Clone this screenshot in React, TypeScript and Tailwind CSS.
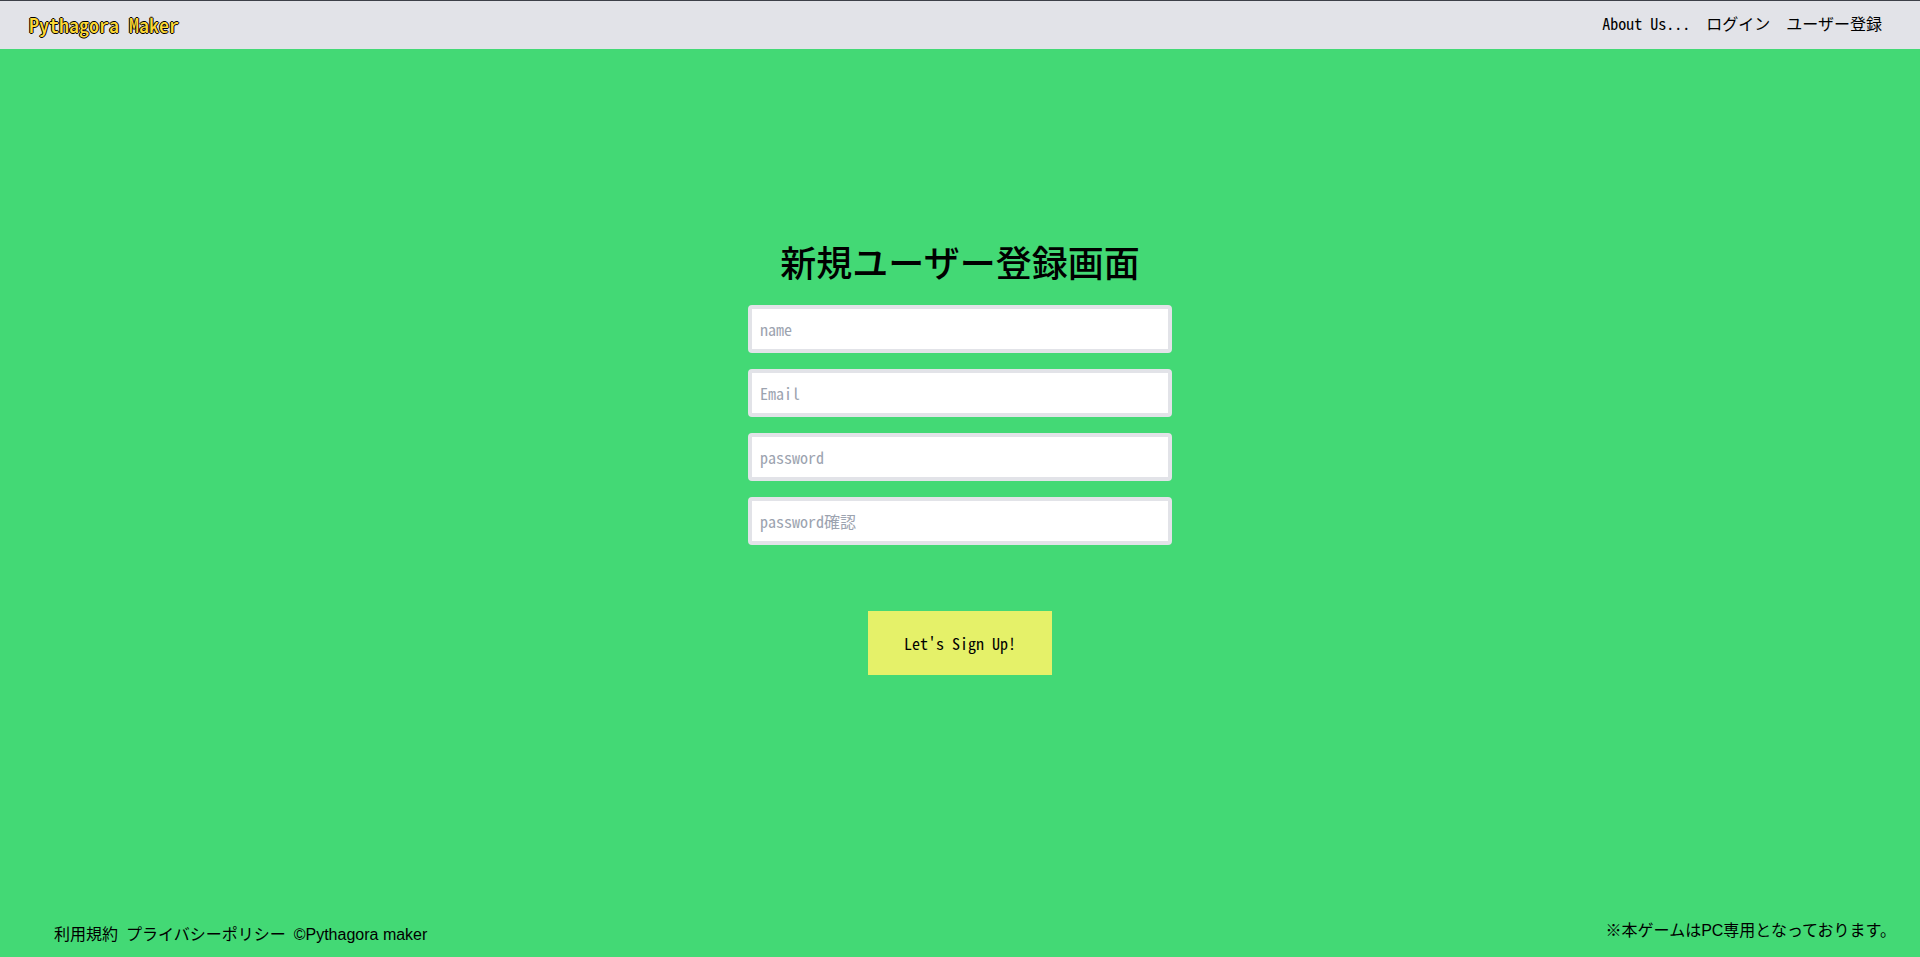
const dotFont =
  "font-['Noto_Sans_CJK_JP',sans-serif] [font-feature-settings:'hwid']";

const fields = [
  { id: 'name', type: 'text', placeholder: 'name' },
  { id: 'email', type: 'email', placeholder: 'Email' },
  { id: 'password', type: 'password', placeholder: 'password' },
  { id: 'password-confirmation', type: 'password', placeholder: 'password確認' },
];

function Header() {
  return (
    <header
      className={`flex h-[49px] items-center justify-between border-t border-[#3d4048] bg-[#e2e3e8] pr-[38px] pl-[29px] text-black ${dotFont}`}
    >
      <a
        href="#"
        className="text-xl leading-7 font-medium text-[#fdd835] [text-shadow:1px_0_0_#000,-1px_0_0_#000,0_1px_0_#000,0_-1px_0_#000]"
      >
        Pythagora Maker
      </a>
      <nav className="flex gap-4 pb-1 text-base leading-6">
        <a href="#about">About Us...</a>
        <a href="#login">ログイン</a>
        <a href="#signup">ユーザー登録</a>
      </nav>
    </header>
  );
}

function SignUpForm() {
  return (
    <form className="flex flex-col items-center" onSubmit={(e) => e.preventDefault()}>
      <h1 className="text-4xl leading-10 font-medium text-black">新規ユーザー登録画面</h1>
      <div className="mt-6 flex w-[424px] max-w-full flex-col gap-4">
        {fields.map((field) => (
          <input
            key={field.id}
            id={field.id}
            name={field.id}
            type={field.type}
            aria-label={field.placeholder}
            placeholder={field.placeholder}
            className="h-12 w-full rounded border-4 border-[#e2e3e8] bg-white px-2 text-base text-black placeholder:text-[#9ca3af]"
          />
        ))}
      </div>
      <button type="submit" className="mt-[66px] h-16 bg-[#e5f169] px-9 text-base text-black">
        Let's Sign Up!
      </button>
    </form>
  );
}

function Footer() {
  return (
    <footer className="flex items-start justify-between pr-6 pb-2.5 pl-[54px] font-['Liberation_Sans','Noto_Sans_CJK_JP',sans-serif] text-base leading-6 text-black">
      <div className="flex gap-2 pt-1">
        <a href="#terms">利用規約</a>
        <a href="#privacy">プライバシーポリシー</a>
        <span>©Pythagora maker</span>
      </div>
      <p>※本ゲームはPC専用となっております。</p>
    </footer>
  );
}

export default function App() {
  return (
    <div lang="ja" className="flex min-h-screen flex-col bg-[#43d975]">
      <Header />
      <main className={`flex-1 px-4 pt-48 pb-12 ${dotFont}`}>
        <SignUpForm />
      </main>
      <Footer />
    </div>
  );
}
